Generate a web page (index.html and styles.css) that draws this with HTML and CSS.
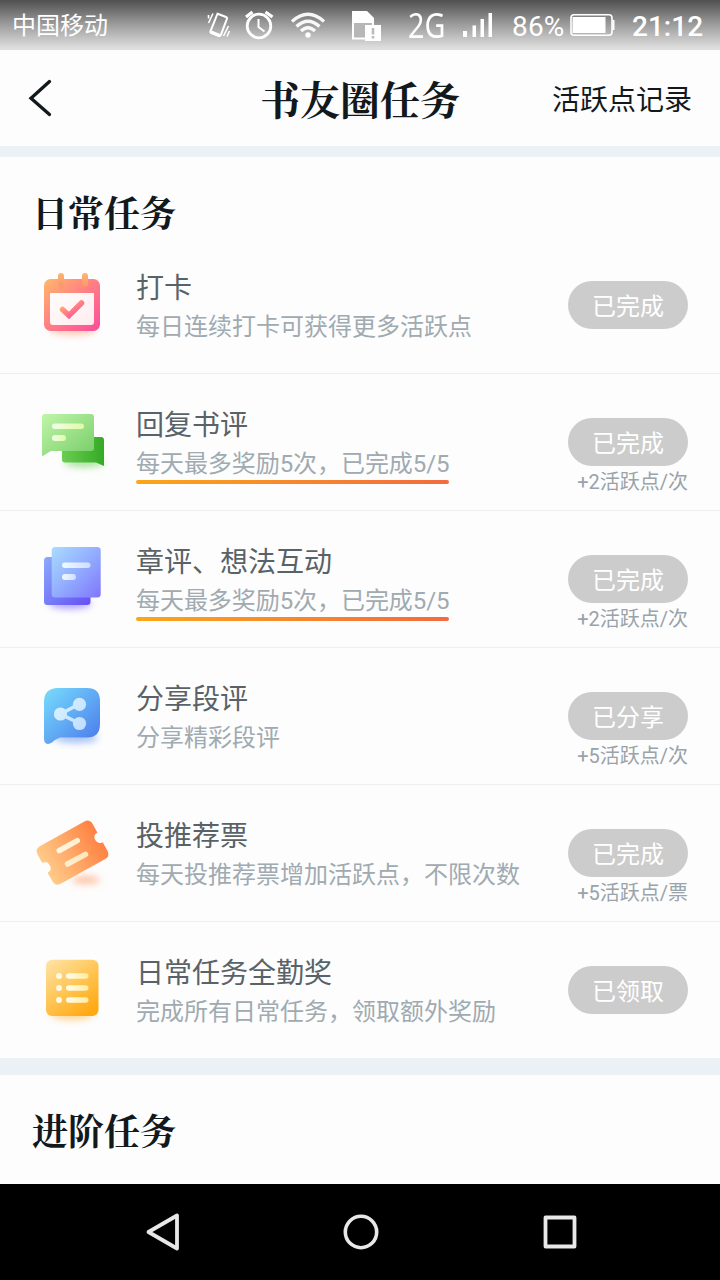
FILE: index.html
```
<!DOCTYPE html>
<html lang="zh-CN">
<head>
<meta charset="utf-8">
<title>书友圈任务</title>
<link rel="stylesheet" href="styles.css">
</head>
<body>
<div class="screen">
  <div class="status">
    <span class="carrier">中国移动</span>
    <svg class="status-icons" width="190" height="50" viewBox="200 0 190 50" fill="none" stroke="#fff">
      <path d="M217 13.2 L225.500 16.500 Q227 17.200 226.400 18.500 L220.300 34.500 Q219.500 36 218 35.400 L211 32.600 Q209.500 32 210 30.500 Z" transform="translate(.5 .5)" stroke-width="2"/>
      <path d="M211 32 L219.500 35.500" stroke-width="3.500"/>
      <path d="M208.500 18.500V15M208.500 23L213 13.500M223.500 36L228.500 26M227 36.500L229.500 31" stroke-width="1.600"/>
      <circle cx="259" cy="26" r="11.800" stroke-width="2.800"/>
      <path d="M258.500 19V27L264.500 31.500" stroke-width="2"/>
      <path d="M246 17L252.500 12M265.500 12L272.500 17" stroke-width="3.200"/>
      <g stroke-width="3.400" opacity=".93"><path d="M292 21.500Q308 7 324 21.500M296.500 26.500Q308 16 319.500 26.500M301 31Q308 24.500 315 31"/></g>
      <circle cx="308" cy="35" r="2.700" fill="#fff" stroke="none"/>
      <path d="M352 11H367L374 18V39.500H352Z" fill="#fff" stroke="none"/>
      <path d="M354 23H372V37.500H354Z" fill="#b7b7b7" stroke="none"/>
      <path d="M365 25H381V41H365Z" fill="#fff" stroke="none"/>
      <path d="M373 28V34.500M373 36V38.500" stroke="#bbb" stroke-width="2.600"/>
    </svg>
    <span class="net"><span class="net-label">2G</span></span>
    <svg class="signal" width="32" height="50" viewBox="0 0 32 50" fill="#fff"><path d="M1 31h4v6H1zM10.500 25.500h3.500V37h-3.500zM18.500 19h3.500v18h-3.500zM26.500 13H30v24h-3.500z"/></svg>
    <span class="percent">86%</span>
    <svg class="battery" width="46" height="50" viewBox="0 0 46 50"><rect x="1" y="14.700" width="41" height="20.600" rx="3" fill="none" stroke="#fff" stroke-width="1.600"/><path d="M2.500 17H35.500V33H2.500zM42.500 20H44.500V30H42.500z" fill="#fff"/></svg>
    <span class="clock">21:12</span>
  </div>

  <header class="header">
    <svg class="back" width="30" height="40" viewBox="0 0 30 40"><path d="M21.500 3.500L3 20.200L21.500 36.500" fill="none" stroke="#12191c" stroke-width="3.300" stroke-linecap="round" stroke-linejoin="miter"/></svg>
    <h1 class="page-title">书友圈任务</h1>
    <span class="records">活跃点记录</span>
  </header>

  <section class="group group-daily">
    <h2 class="group-title">日常任务</h2>

    <div class="task">
      <svg class="icon" viewBox="0 0 136 137">
        <defs>
          <linearGradient id="pink" x1="0" y1="0" x2="1" y2="1"><stop offset="0" stop-color="#ffb86b"/><stop offset=".5" stop-color="#ff7d85"/><stop offset="1" stop-color="#fc4b9c"/></linearGradient>
          <linearGradient id="tab" x1="0" y1="0" x2="0" y2="1"><stop offset="0" stop-color="#ffb56f"/><stop offset="1" stop-color="#ff946d"/></linearGradient>
          <linearGradient id="page" x1="0" y1="0" x2="1" y2="1"><stop offset="0" stop-color="#fffdfc"/><stop offset="1" stop-color="#ffecef"/></linearGradient>
          <filter id="soft" x="-50%" y="-100%" width="200%" height="300%"><feGaussianBlur stdDeviation="3.500"/></filter>
        </defs>
        <ellipse cx="73" cy="93" rx="23" ry="5" fill="#ffa27a" opacity=".6" filter="url(#soft)"/>
        <rect x="44" y="42" width="56" height="52" rx="6.500" fill="url(#pink)"/>
        <path d="M50 56H94V85Q94 88 91 88H53Q50 88 50 85Z" fill="url(#page)"/>
        <rect x="58" y="36" width="6" height="14" rx="3" fill="url(#tab)"/>
        <rect x="82" y="36" width="6" height="14" rx="3" fill="url(#tab)"/>
        <path d="M62.500 72.500L69 78.500L81.500 66" fill="none" stroke="url(#pink)" stroke-width="5.500" stroke-linecap="round"/>
      </svg>
      <div class="info"><div class="name">打卡</div><div class="desc">每日连续打卡可获得更多活跃点</div></div>
      <div class="state"><span class="pill">已完成</span></div>
    </div>

    <div class="task">
      <svg class="icon" viewBox="0 0 136 137">
        <defs>
          <linearGradient id="leaf" x1="0" y1="0" x2="1" y2="1"><stop offset="0" stop-color="#c0f5aa"/><stop offset="1" stop-color="#77cd68"/></linearGradient>
          <linearGradient id="grass" x1="0" y1="0" x2="1" y2="0"><stop offset="0" stop-color="#6ace51"/><stop offset="1" stop-color="#35a927"/></linearGradient>
          <linearGradient id="lime" x1="0" y1="0" x2="1" y2="0"><stop offset="0" stop-color="#f1ffe9"/><stop offset="1" stop-color="#dffaa4"/></linearGradient>
        </defs>
        <ellipse cx="84" cy="89" rx="20" ry="4" fill="#65cc50" opacity=".6" filter="url(#soft)"/>
        <path d="M65 63H101Q104 63 104 66V92L96 88.500H65Q62 88.500 62 85.500V66Q62 63 65 63Z" fill="url(#grass)"/>
        <path d="M45 40H91Q94 40 94 43V74Q94 77 91 77H51L42 82.500V43Q42 40 45 40Z" fill="url(#leaf)"/>
        <rect x="52" y="49.500" width="32" height="5.500" rx="2.750" fill="url(#lime)"/>
        <rect x="52" y="61" width="14" height="6" rx="3" fill="url(#lime)"/>
      </svg>
      <div class="info"><div class="name">回复书评</div><div class="desc progress">每天最多奖励5次，已完成5/5</div></div>
      <div class="state"><span class="pill">已完成</span><span class="reward">+2活跃点/次</span></div>
    </div>

    <div class="task">
      <svg class="icon" viewBox="0 0 136 137">
        <defs>
          <linearGradient id="sheet" x1="0" y1="0" x2="1" y2="1"><stop offset="0" stop-color="#aadcff"/><stop offset=".5" stop-color="#92adff"/><stop offset="1" stop-color="#8175fc"/></linearGradient>
          <linearGradient id="violet" x1="0" y1="0" x2="1" y2="1"><stop offset="0" stop-color="#8babfb"/><stop offset="1" stop-color="#654ff5"/></linearGradient>
          <linearGradient id="mist" x1="0" y1="0" x2="1" y2="0"><stop offset="0" stop-color="#effaff"/><stop offset="1" stop-color="#d1dcff"/></linearGradient>
        </defs>
        <ellipse cx="70" cy="93" rx="21" ry="5" fill="#7b65ff" opacity=".6" filter="url(#soft)"/>
        <rect x="44" y="46" width="46.500" height="48" rx="3.500" fill="url(#violet)"/>
        <rect x="51.700" y="36" width="49" height="50.500" rx="3.500" fill="url(#sheet)"/>
        <rect x="62" y="51.500" width="28.500" height="5.500" rx="2.750" fill="url(#mist)"/>
        <rect x="62" y="63" width="14" height="6" rx="3" fill="url(#mist)"/>
      </svg>
      <div class="info"><div class="name">章评、想法互动</div><div class="desc progress">每天最多奖励5次，已完成5/5</div></div>
      <div class="state"><span class="pill">已完成</span><span class="reward">+2活跃点/次</span></div>
    </div>

    <div class="task">
      <svg class="icon" viewBox="0 0 136 137">
        <defs>
          <linearGradient id="sky" x1="0" y1="0" x2="1" y2="1"><stop offset="0" stop-color="#77ddfc"/><stop offset="1" stop-color="#4a78eb"/></linearGradient>
          <linearGradient id="frost" gradientUnits="userSpaceOnUse" x1="54" y1="56" x2="86" y2="80"><stop offset="0" stop-color="#d7f3ff"/><stop offset="1" stop-color="#c2dcff"/></linearGradient>
        </defs>
        <ellipse cx="76" cy="90" rx="22" ry="5" fill="#6797f5" opacity=".6" filter="url(#soft)"/>
        <path d="M58 40H87Q100 40 100 53V76Q100 89.500 87 89.500H60Q56 91 52 94.500Q48 97 45.500 95Q44 94 44 90V54Q44 40 58 40Z" fill="url(#sky)"/>
        <path d="M79.500 56L60.500 66L79.500 75.500" fill="none" stroke="url(#frost)" stroke-width="3.600"/>
        <g fill="url(#frost)"><circle cx="60.500" cy="66" r="6.600"/><circle cx="79.500" cy="56.300" r="6.600"/><circle cx="79.500" cy="75.500" r="6.600"/></g>
      </svg>
      <div class="info"><div class="name">分享段评</div><div class="desc">分享精彩段评</div></div>
      <div class="state"><span class="pill">已分享</span><span class="reward">+5活跃点/次</span></div>
    </div>

    <div class="task">
      <svg class="icon" viewBox="0 0 136 137">
        <defs>
          <linearGradient id="ticket" x1="0" y1="0" x2="1" y2="0"><stop offset="0" stop-color="#ffcb89"/><stop offset="1" stop-color="#ff8142"/></linearGradient>
          <linearGradient id="cream" gradientUnits="userSpaceOnUse" x1="57" y1="60" x2="88" y2="75"><stop offset="0" stop-color="#fff9e6"/><stop offset="1" stop-color="#ffe5b7"/></linearGradient>
        </defs>
        <ellipse cx="86" cy="95" rx="14" ry="4" fill="#ff9b66" opacity=".6" filter="url(#soft)"/>
        <path transform="translate(72.500 67.600) rotate(-29)" d="M-25 -21.500H25Q31.500 -21.500 31.500 -15V-5.500Q26 -5.500 26 0T31.500 5.500V15Q31.500 21.500 25 21.500H-25Q-31.500 21.500 -31.500 15V5.500Q-26 5.500 -26 0T-31.500 -5.500V-15Q-31.500 -21.500 -25 -21.500Z" fill="url(#ticket)"/>
        <path d="M59.300 65.700L77.300 55.700M67.500 79L85.500 69.300" stroke="url(#cream)" stroke-width="5.500" stroke-linecap="round"/>
      </svg>
      <div class="info"><div class="name">投推荐票</div><div class="desc">每天投推荐票增加活跃点，不限次数</div></div>
      <div class="state"><span class="pill">已完成</span><span class="reward">+5活跃点/票</span></div>
    </div>

    <div class="task">
      <svg class="icon" viewBox="0 0 136 137">
        <defs>
          <linearGradient id="gold" x1="0" y1="0" x2=".7" y2="1"><stop offset="0" stop-color="#ffe4aa"/><stop offset=".5" stop-color="#ffc85c"/><stop offset="1" stop-color="#ffaa15"/></linearGradient>
          <linearGradient id="butter" x1="0" y1="0" x2="1" y2="0"><stop offset="0" stop-color="#fffdf0"/><stop offset="1" stop-color="#ffec9f"/></linearGradient>
        </defs>
        <ellipse cx="72" cy="93" rx="21" ry="5" fill="#ffb74c" opacity=".6" filter="url(#soft)"/>
        <rect x="46" y="37.700" width="52.500" height="56.300" rx="6" fill="url(#gold)"/>
        <g fill="#fff8e3"><circle cx="59" cy="54" r="3"/><circle cx="59" cy="66" r="3"/><circle cx="59" cy="78" r="3"/></g>
        <g fill="url(#butter)"><rect x="66" y="51.200" width="22.500" height="5.600" rx="2.800"/><rect x="66" y="63.200" width="22.500" height="5.600" rx="2.800"/><rect x="66" y="75.200" width="22.500" height="5.600" rx="2.800"/></g>
      </svg>
      <div class="info"><div class="name">日常任务全勤奖</div><div class="desc">完成所有日常任务，领取额外奖励</div></div>
      <div class="state"><span class="pill">已领取</span></div>
    </div>
  </section>

  <section class="group group-next">
    <h2 class="group-title">进阶任务</h2>
  </section>

  <nav class="navbar">
    <svg width="720" height="96" viewBox="0 0 720 96" fill="none" stroke="#e8e8e8" stroke-linejoin="round">
      <path d="M148.500 48L177 31.500V64.500Z" stroke-width="3.800"/>
      <circle cx="361" cy="48" r="15.700" stroke-width="3.600"/>
      <rect x="545.500" y="33.500" width="29" height="29" stroke-width="3.800"/>
    </svg>
  </nav>
</div>
</body>
</html>
```
FILE: styles.css
```
* { box-sizing: border-box; }
body { margin: 0; background: #fdfdfd; font-family: Roboto, "Noto Sans CJK SC", sans-serif; }
.screen { width: 720px; height: 1280px; overflow: hidden; display: flex; flex-direction: column; background: #fdfdfd; }
svg { display: block; flex: none; }

.status { height: 50px; flex: none; display: flex; align-items: center; padding-left: 12px; color: #fff; background: linear-gradient(#4f4f4f, #989898 46%, #dedede 96%); white-space: nowrap; }
.carrier { flex: none; width: 188px; font-size: 24px; line-height: 50px; padding-top: 2px; }
.net { flex: none; width: 72px; padding-left: 18px; font-family: "Noto Sans", sans-serif; font-size: 35px; line-height: 50px; }
.net-label { display: inline-block; transform: scaleX(.82); transform-origin: left; }
.percent { flex: none; width: 76px; padding-left: 18px; font-size: 28px; line-height: 50px; padding-top: 3px; letter-spacing: .2px; }
.clock { flex: none; padding-left: 16px; font-size: 28px; font-weight: 500; line-height: 50px; padding-top: 3px; }

.header { height: 107px; flex: none; display: grid; grid-template-columns: 180px 1fr 180px; align-items: center; border-bottom: 11px solid #ebf1f4; color: #12191c; }
.back { margin-left: 28px; }
.page-title { margin: 0; text-align: center; font-family: "Noto Serif CJK SC", "Noto Serif SC", "Noto Sans CJK SC", serif; font-size: 40px; font-weight: 700; line-height: 96px; }
.records { padding: 6px 28px 0 0; text-align: right; font-size: 28px; line-height: 90px; white-space: nowrap; }

.group-title { margin: 0; padding-left: 32px; font-family: "Noto Serif CJK SC", "Noto Serif SC", "Noto Sans CJK SC", serif; font-size: 36px; font-weight: 700; line-height: 52px; color: #12191c; }
.group-daily { flex: none; height: 918px; padding-top: 29px; border-bottom: 17px solid #ebf1f4; }
.group-daily .group-title { height: 51px; }
.group-next { flex: none; height: 109px; padding-top: 29px; }

.task { height: 137px; display: flex; border-bottom: 1px solid #edf0f1; }
.task:last-child { border-bottom: 0; height: 136px; }
.icon { width: 136px; height: 137px; }
.info { flex: 1; display: flex; flex-direction: column; align-items: flex-start; padding-top: 32px; white-space: nowrap; }
.name { font-size: 28px; line-height: 40px; color: #596267; }
.desc { font-size: 24px; line-height: 36px; color: #a0aab1; }
.progress { position: relative; letter-spacing: -.06px; }
.progress::after { content: ""; position: absolute; left: 0; right: 0; bottom: -2px; height: 4px; border-radius: 2px; background: linear-gradient(90deg, #fba619, #f26b3f); }
.state { width: 152px; padding: 44px 32px 0 0; display: flex; flex-direction: column; align-items: flex-end; }
.pill { width: 120px; height: 48px; border-radius: 24px; background: #ccc; color: #fff; font-size: 24px; line-height: 48px; padding-top: 2px; text-align: center; }
.reward { margin-top: 1px; font-size: 20px; line-height: 30px; color: #98a3aa; white-space: nowrap; }

.navbar { height: 96px; flex: none; background: #000; }
```
